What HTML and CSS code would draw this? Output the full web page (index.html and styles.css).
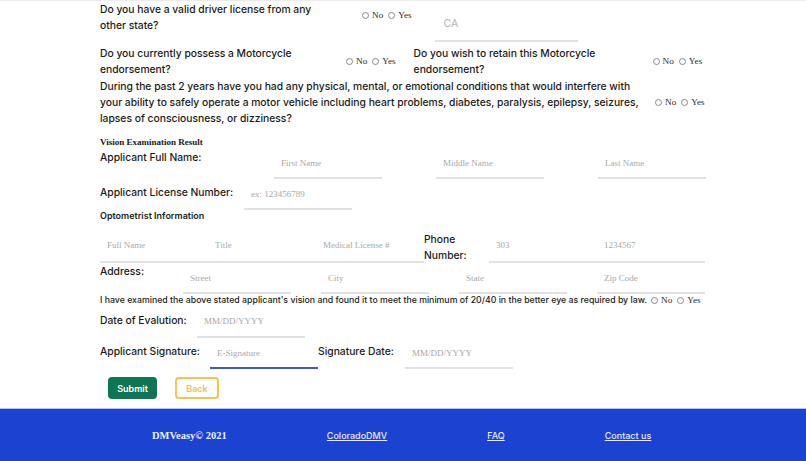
FILE: index.html
```html
<!DOCTYPE html>
<html>
<head>
<meta charset="utf-8">
<link rel="stylesheet" href="styles.css">
</head>
<body>
<div class="page">
  <form class="form">
    <div class="row r1">
      <div class="q q-w1">Do you have a valid driver license from any other state?</div>
      <div class="radios r1-radios">
        <label class="opt"><input type="radio" name="a">No</label>
        <label class="opt"><input type="radio" name="a">Yes</label>
      </div>
      <input class="field field-ca" placeholder="CA">
    </div>

    <div class="row r2">
      <div class="q q-w2">Do you currently possess a Motorcycle endorsement?</div>
      <div class="radios">
        <label class="opt"><input type="radio" name="b">No</label>
        <label class="opt"><input type="radio" name="b">Yes</label>
      </div>
      <div class="q q-w3">Do you wish to retain this Motorcycle endorsement?</div>
      <div class="radios">
        <label class="opt"><input type="radio" name="c">No</label>
        <label class="opt"><input type="radio" name="c">Yes</label>
      </div>
    </div>

    <div class="row r3">
      <div class="q q-w4">During the past 2 years have you had any physical, mental, or emotional conditions that would interfere with your ability to safely operate a motor vehicle including heart problems, diabetes, paralysis, epilepsy, seizures, lapses of consciousness, or dizziness?</div>
      <div class="radios">
        <label class="opt"><input type="radio" name="d">No</label>
        <label class="opt"><input type="radio" name="d">Yes</label>
      </div>
    </div>

    <h3 class="section-title">Vision Examination Result</h3>

    <div class="line line-name">
      <label class="lbl lbl-name">Applicant Full Name:</label>
      <div class="inputs gap-name">
        <input class="field" placeholder="First Name">
        <input class="field" placeholder="Middle Name">
        <input class="field" placeholder="Last Name">
      </div>
    </div>

    <div class="line line-lic">
      <label class="lbl lbl-lic">Applicant License Number:</label>
      <input class="field" placeholder="ex: 123456789">
    </div>

    <h4 class="sub-title">Optometrist Information</h4>

    <div class="line line-opt">
      <input class="field field-tall" placeholder="Full Name">
      <input class="field field-tall" placeholder="Title">
      <input class="field field-tall" placeholder="Medical License #">
      <label class="lbl lbl-phone">Phone Number:</label>
      <input class="field field-tall" placeholder="303">
      <input class="field field-tall" placeholder="1234567">
    </div>

    <div class="line line-addr">
      <label class="lbl lbl-addr">Address:</label>
      <div class="inputs gap-addr">
        <input class="field" placeholder="Street">
        <input class="field" placeholder="City">
        <input class="field" placeholder="State">
        <input class="field" placeholder="Zip Code">
      </div>
    </div>

    <div class="row r-exam">
      <span class="exam-text">I have examined the above stated applicant's vision and found it to meet the minimum of 20/40 in the better eye as required by law.</span>
      <div class="radios">
        <label class="opt"><input type="radio" name="e">No</label>
        <label class="opt"><input type="radio" name="e">Yes</label>
      </div>
    </div>

    <div class="line line-date">
      <label class="lbl lbl-date">Date of Evalution:</label>
      <input class="field field-date" placeholder="MM/DD/YYYY">
    </div>

    <div class="line line-sig">
      <label class="lbl lbl-sig">Applicant Signature:</label>
      <input class="field field-focus" placeholder="E-Signature">
      <label class="lbl lbl-sigdate">Signature Date:</label>
      <input class="field" placeholder="MM/DD/YYYY">
    </div>

    <div class="buttons">
      <button type="button" class="btn btn-submit">Submit</button>
      <button type="button" class="btn btn-back">Back</button>
    </div>
  </form>

  <footer class="footer">
    <span class="brand">DMVeasy© 2021</span>
    <a class="flink" href="#">ColoradoDMV</a>
    <a class="flink" href="#">FAQ</a>
    <a class="flink" href="#">Contact us</a>
  </footer>
</div>
</body>
</html>
```

FILE: styles.css
```css
* { box-sizing: border-box; }

body {
  margin: 0;
  background: #ffffff;
  font-family: Inter, "Liberation Sans", sans-serif;
  color: #1a1a1a;
}

.page {
  border-top: 1px solid #ececec;
}

.form {
  margin: 0 0 0 100px;
  width: 610px;
}

.row {
  display: flex;
  align-items: center;
}

.q {
  font-size: 10.3px;
  font-weight: 500;
  line-height: 16px;
  flex: none;
}

.q-w1 { width: 262px; padding-right: 30px; align-self: flex-start; }
.q-w2 { width: 246px; padding-right: 20px; }
.q-w3 { width: 239px; margin-left: 18px; padding-right: 10px; }
.q-w4 { width: 555px; padding-right: 6px; }

.r1 { height: 40px; align-items: flex-start; }
.r1-radios { margin-top: 8px; }
.r2 { margin-top: 4px; height: 32px; }
.r3 { margin-top: 1px; height: 48px; }

.radios {
  display: flex;
  align-items: center;
  flex: none;
  font-family: "Liberation Serif", serif;
  font-size: 9.2px;
  line-height: 12px;
  color: #2a2a2a;
}

.opt {
  display: flex;
  align-items: center;
  margin-right: 5px;
}
.opt:last-child { margin-right: 0; }

.opt input {
  -webkit-appearance: none;
  appearance: none;
  width: 7px;
  height: 7px;
  margin: 0 3px 0 0;
  border: 1px solid #8a8a8a;
  border-radius: 50%;
  background: #fff;
}

.field {
  flex: none;
  width: 108px;
  height: 31px;
  padding: 0 0 0 7px;
  border: 0;
  border-bottom: 2px solid #e2e2e2;
  background: transparent;
  outline: none;
  font-family: "Liberation Serif", serif;
  font-size: 9px;
  color: #333;
}

.field::placeholder { color: #a9a9a9; }

.field-ca {
  width: 143px;
  height: 36px;
  margin: 5px 0 0 23px;
  padding-left: 9px;
  font-family: Inter, "Liberation Sans", sans-serif;
  font-size: 10.5px;
}
.field-ca::placeholder { color: #b4b4b4; }

.field-tall { height: 35px; }
.field-date { height: 32px; }
.field-focus { border-bottom-color: #3d5ccf; }

.section-title {
  margin: 10px 0 0;
  font-family: "Liberation Serif", serif;
  font-weight: 700;
  font-size: 9px;
  line-height: 12px;
  color: #1a1a1a;
}

.sub-title {
  margin: 0;
  font-size: 9px;
  font-weight: 600;
  line-height: 12px;
  color: #1c1c1c;
}

.line {
  display: flex;
  align-items: flex-start;
}

.lbl {
  flex: none;
  font-size: 10.3px;
  font-weight: 500;
  line-height: 16px;
}

.inputs { display: flex; }
.gap-name { gap: 54px; }
.gap-addr { gap: 30px; }

.lbl-name { width: 174px; padding-top: 1px; }
.lbl-lic { width: 144px; padding-top: 5px; }
.lbl-phone { width: 65px; padding-top: 3px; padding-right: 18px; }
.lbl-addr { width: 83px; }
.lbl-date { width: 97px; padding-top: 6px; }
.lbl-sig { width: 110px; padding-top: 5px; }
.lbl-sigdate { width: 87px; padding-top: 5px; }

.line-opt { margin-top: 6px; }

.r-exam {
  height: 12px;
}
.exam-text {
  flex: none;
  width: 551px;
  font-size: 8.75px;
  font-weight: 500;
  line-height: 12px;
  white-space: nowrap;
}

.buttons {
  display: flex;
  gap: 18px;
  margin: 8px 0 0 8px;
}

.btn {
  height: 22px;
  border-radius: 4px;
  font-family: Inter, "Liberation Sans", sans-serif;
  font-size: 9px;
  font-weight: 600;
  padding: 0;
  cursor: pointer;
}

.btn-submit {
  width: 49px;
  background: #0f7655;
  color: #ffffff;
  border: 0;
}

.btn-back {
  width: 44px;
  background: #ffffff;
  color: #f5bf45;
  border: 2px solid #f6c450;
}

.footer {
  margin-top: 10px;
  height: 52px;
  background: #1b42d0;
  box-shadow: 0 -1px 0 #b7c3ef;
  display: flex;
  align-items: center;
  gap: 100px;
  padding-left: 152px;
}

.brand {
  font-family: "Liberation Serif", serif;
  font-weight: 700;
  font-size: 10.5px;
  color: #eef1ff;
}

.flink {
  font-size: 9px;
  font-weight: 500;
  color: #e4e9ff;
  text-decoration: underline;
}
```
